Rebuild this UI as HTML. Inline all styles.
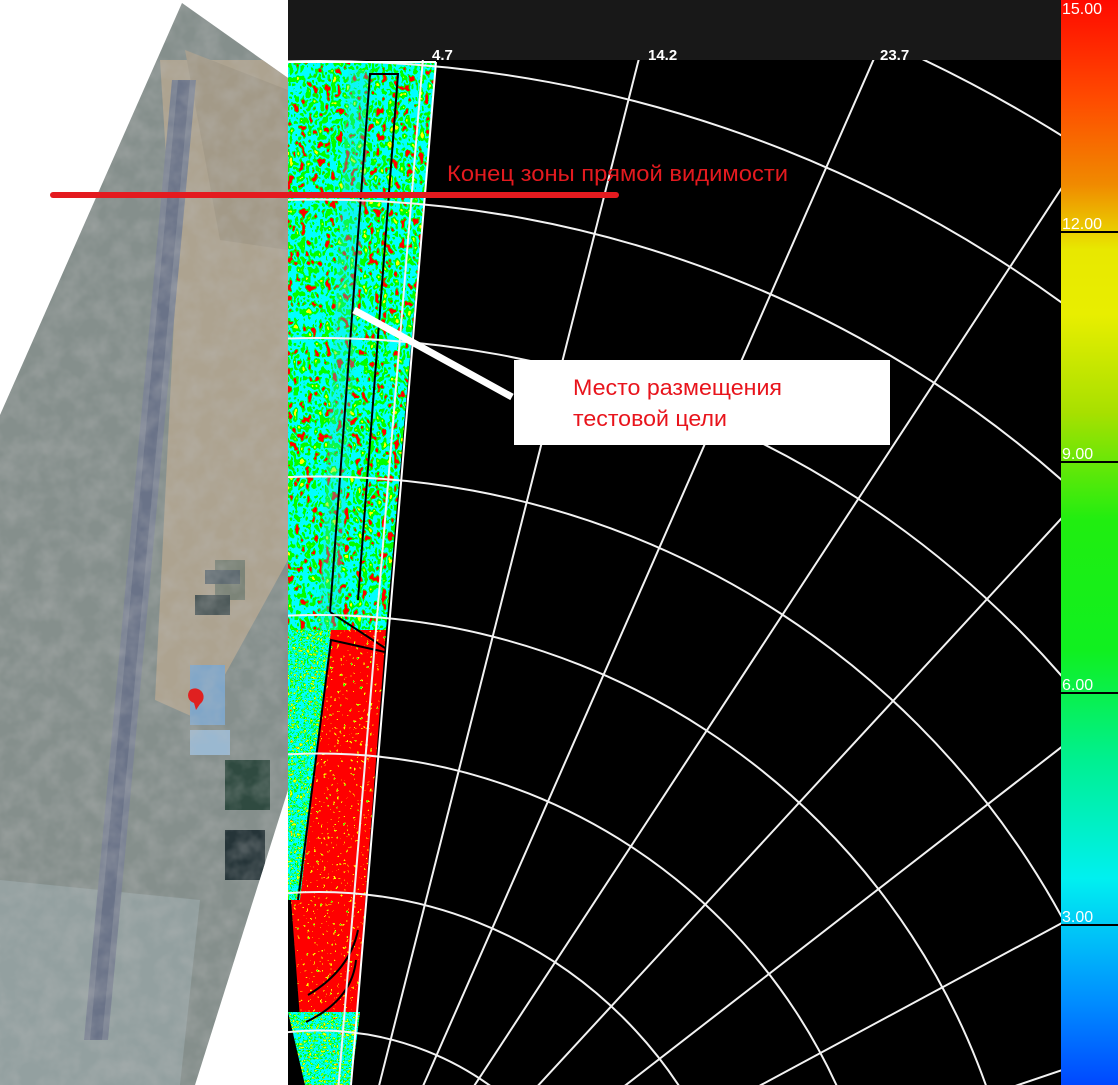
<!DOCTYPE html>
<html><head><meta charset="utf-8"><style>
html,body{margin:0;padding:0;background:#fff;overflow:hidden;width:1118px;height:1085px;}
svg{display:block;position:absolute;left:0;top:0;}
text{font-family:"Liberation Sans","DejaVu Sans",sans-serif;}
</style></head><body>
<svg width="1118" height="1085" viewBox="0 0 1118 1085" xmlns="http://www.w3.org/2000/svg">
<defs>
<clipPath id="plot"><rect x="288" y="60" width="773" height="1025"/></clipPath>
<clipPath id="wedgeU"><polygon points="288,62 436,62 386,630 288,630"/></clipPath>
<clipPath id="wedgeL"><polygon points="288,630 386,630 351,1085 305,1085 288,860"/></clipPath>
<clipPath id="wedgeLL"><polygon points="288,630 331,630 300,900 288,900"/></clipPath>
<clipPath id="wedgeB"><polygon points="288,1012 360,1012 351,1085 305,1085"/></clipPath>
<clipPath id="sat"><polygon points="182,3 288,78 288,790 195,1085 0,1085 0,415"/></clipPath>
<filter id="nU" filterUnits="userSpaceOnUse" x="280" y="55" width="170" height="1040">
<feTurbulence type="fractalNoise" baseFrequency="0.16 0.12" numOctaves="2" seed="3"/>
<feColorMatrix type="matrix" values="1 0 0 0 0 1 0 0 0 0 1 0 0 0 0 0 0 0 0 1"/>
<feComponentTransfer>
<feFuncR type="discrete" tableValues="1 1 1 1 0 0 0 0 0 1 1 0"/>
<feFuncG type="discrete" tableValues="0 0 0 0 1 1 1 1 1 1 1 1"/>
<feFuncB type="discrete" tableValues="0 0 0 0 0 1 1 0 0 0 0 0"/>
</feComponentTransfer></filter>
<filter id="nL" filterUnits="userSpaceOnUse" x="280" y="620" width="120" height="470">
<feTurbulence type="fractalNoise" baseFrequency="0.3 0.3" numOctaves="2" seed="7"/>
<feColorMatrix type="matrix" values="1 0 0 0 0 1 0 0 0 0 1 0 0 0 0 0 0 0 0 1"/>
<feComponentTransfer>
<feFuncR type="discrete" tableValues="1 1 1 1 1 1 1 1 0 0"/>
<feFuncG type="discrete" tableValues="0 0 0 0 0 0 0 1 1 1"/>
<feFuncB type="discrete" tableValues="0 0 0 0 0 0 0 0 0 1"/>
</feComponentTransfer></filter>
<filter id="nG" filterUnits="userSpaceOnUse" x="280" y="620" width="120" height="470">
<feTurbulence type="fractalNoise" baseFrequency="0.3 0.3" numOctaves="2" seed="11"/>
<feColorMatrix type="matrix" values="1 0 0 0 0 1 0 0 0 0 1 0 0 0 0 0 0 0 0 1"/>
<feComponentTransfer>
<feFuncR type="discrete" tableValues="1 1 1 0 0 0 0 1 1 1"/>
<feFuncG type="discrete" tableValues="0 0 1 1 1 1 1 1 1 1"/>
<feFuncB type="discrete" tableValues="0 0 0 0 1 1 0 0 0 0"/>
</feComponentTransfer></filter>
<filter id="nS" filterUnits="userSpaceOnUse" x="0" y="0" width="290" height="1085">
<feTurbulence type="fractalNoise" baseFrequency="0.05" numOctaves="3" seed="2"/>
<feColorMatrix type="matrix" values="0 0 0 0 0.5 0 0 0 0 0.5 0 0 0 0 0.5 0.6 0 0 0 -0.2"/>
</filter>
<linearGradient id="cb" x1="0" y1="0" x2="0" y2="1">
<stop offset="0" stop-color="#ff0a00"/>
<stop offset="0.09" stop-color="#ff4a00"/>
<stop offset="0.17" stop-color="#f08a00"/>
<stop offset="0.23" stop-color="#e8e800"/>
<stop offset="0.29" stop-color="#e8ee00"/>
<stop offset="0.38" stop-color="#a8e000"/>
<stop offset="0.48" stop-color="#20ee10"/>
<stop offset="0.6" stop-color="#10f020"/>
<stop offset="0.7" stop-color="#00f090"/>
<stop offset="0.81" stop-color="#00f0f0"/>
<stop offset="0.92" stop-color="#0090ff"/>
<stop offset="1" stop-color="#0048ff"/>
</linearGradient>
</defs>

<g clip-path="url(#sat)">
<rect x="0" y="0" width="290" height="1085" fill="#858f8c"/>
<polygon points="160,60 288,60 288,560 200,720 155,700 175,300" fill="#ada390"/>
<polygon points="185,50 288,90 288,250 220,240" fill="#a39a88"/>
<polygon points="0,880 200,900 180,1085 0,1085" fill="#93a0a0"/>
<polygon points="172,80 196,80 108,1040 84,1040" fill="#7c8494"/>
<polygon points="178,80 190,80 102,1040 90,1040" fill="#6a7388"/>
<rect x="215" y="560" width="30" height="40" fill="#7c8478"/>
<rect x="205" y="570" width="35" height="14" fill="#5e6a70"/>
<rect x="195" y="595" width="35" height="20" fill="#4c5858"/>
<rect x="190" y="665" width="35" height="60" fill="#80a6c8"/>
<rect x="190" y="730" width="40" height="25" fill="#9ab8d0"/>
<rect x="225" y="760" width="45" height="50" fill="#2f4a40"/>
<rect x="225" y="830" width="40" height="50" fill="#253438"/>
<rect x="0" y="0" width="290" height="1085" filter="url(#nS)"/>
<path d="M190 690 a8 8 0 1 1 10 14 l-4 6 l-2 -7 a8 8 0 0 1 -4 -13z" fill="#e02020"/>
</g>

<rect x="288" y="0" width="773" height="60" fill="#181818"/>
<rect x="288" y="60" width="773" height="1025" fill="#000"/>

<g clip-path="url(#wedgeU)">
<rect x="280" y="55" width="170" height="590" filter="url(#nU)"/>
<polygon points="348,70 372,70 338,630 318,630" fill="#20e8e0" opacity="0.35"/>
</g>
<g clip-path="url(#wedgeL)">
<rect x="280" y="620" width="120" height="470" filter="url(#nL)"/>
</g>
<g clip-path="url(#wedgeLL)">
<rect x="280" y="620" width="120" height="470" filter="url(#nG)"/>
</g>
<g clip-path="url(#wedgeB)">
<rect x="280" y="620" width="120" height="470" filter="url(#nG)"/>
</g>
<g fill="none" stroke="#000" stroke-width="2">
<polyline points="330,612 370,74 398,74 358,600"/>
<polyline points="330,612 385,648"/>
<polyline points="298,900 331,640 385,652"/>
<path d="M308 995 Q350 970 358 930"/>
<path d="M306 1022 Q352 1000 356 960"/>
</g>

<g clip-path="url(#plot)" fill="none" stroke="#f2f2f2" stroke-width="2">
<circle cx="319" cy="1323" r="154"/>
<circle cx="319" cy="1323" r="292.5"/>
<circle cx="319" cy="1323" r="431"/>
<circle cx="319" cy="1323" r="569.5"/>
<circle cx="319" cy="1323" r="708"/>
<circle cx="319" cy="1323" r="846.5"/>
<circle cx="319" cy="1323" r="985"/>
<circle cx="319" cy="1323" r="1123.5"/>
<circle cx="319" cy="1323" r="1262"/>
<circle cx="319" cy="1323" r="1400.5"/>
<circle cx="319" cy="1323" r="1539"/>
<g transform="translate(319 1323)">
<line x1="0" y1="0" x2="0" y2="-2000" transform="rotate(4.7)"/>
<line x1="0" y1="0" x2="0" y2="-2000" transform="rotate(14.2)"/>
<line x1="0" y1="0" x2="0" y2="-2000" transform="rotate(23.7)"/>
<line x1="0" y1="0" x2="0" y2="-2000" transform="rotate(33.2)"/>
<line x1="0" y1="0" x2="0" y2="-2000" transform="rotate(42.7)"/>
<line x1="0" y1="0" x2="0" y2="-2000" transform="rotate(52.2)"/>
<line x1="0" y1="0" x2="0" y2="-2000" transform="rotate(61.7)"/>
<line x1="0" y1="0" x2="0" y2="-2000" transform="rotate(71.2)"/>
</g>
</g>
<line x1="288" y1="62" x2="436" y2="62" stroke="#fff" stroke-width="2"/>
<line x1="436" y1="62" x2="351" y2="1085" stroke="#fff" stroke-width="2"/>

<g fill="#fff" font-size="15" font-weight="bold">
<text x="432" y="60">4.7</text>
<text x="648" y="60">14.2</text>
<text x="880" y="60">23.7</text>
</g>

<rect x="1061" y="0" width="57" height="1085" fill="url(#cb)"/>
<g stroke="#000" stroke-width="2">
<line x1="1061" y1="232" x2="1118" y2="232"/>
<line x1="1061" y1="462" x2="1118" y2="462"/>
<line x1="1061" y1="693" x2="1118" y2="693"/>
<line x1="1061" y1="925" x2="1118" y2="925"/>
</g>
<g fill="#fff" font-size="16">
<text x="1062" y="14">15.00</text>
<text x="1062" y="229">12.00</text>
<text x="1062" y="459">9.00</text>
<text x="1062" y="690">6.00</text>
<text x="1062" y="922">3.00</text>
</g>

<line x1="53" y1="195" x2="616" y2="195" stroke="#e41a1f" stroke-width="6" stroke-linecap="round"/>
<text x="447" y="181" fill="#e41a1f" font-size="22" textLength="341" lengthAdjust="spacingAndGlyphs">Конец зоны прямой видимости</text>
<line x1="354" y1="310" x2="512" y2="397" stroke="#fff" stroke-width="7"/>
<rect x="514" y="360" width="376" height="85" fill="#fff"/>
<text x="573" y="395" fill="#e8141c" font-size="22" textLength="209" lengthAdjust="spacingAndGlyphs">Место размещения</text>
<text x="573" y="426" fill="#e8141c" font-size="22" textLength="154" lengthAdjust="spacingAndGlyphs">тестовой цели</text>
</svg>
</body></html>
